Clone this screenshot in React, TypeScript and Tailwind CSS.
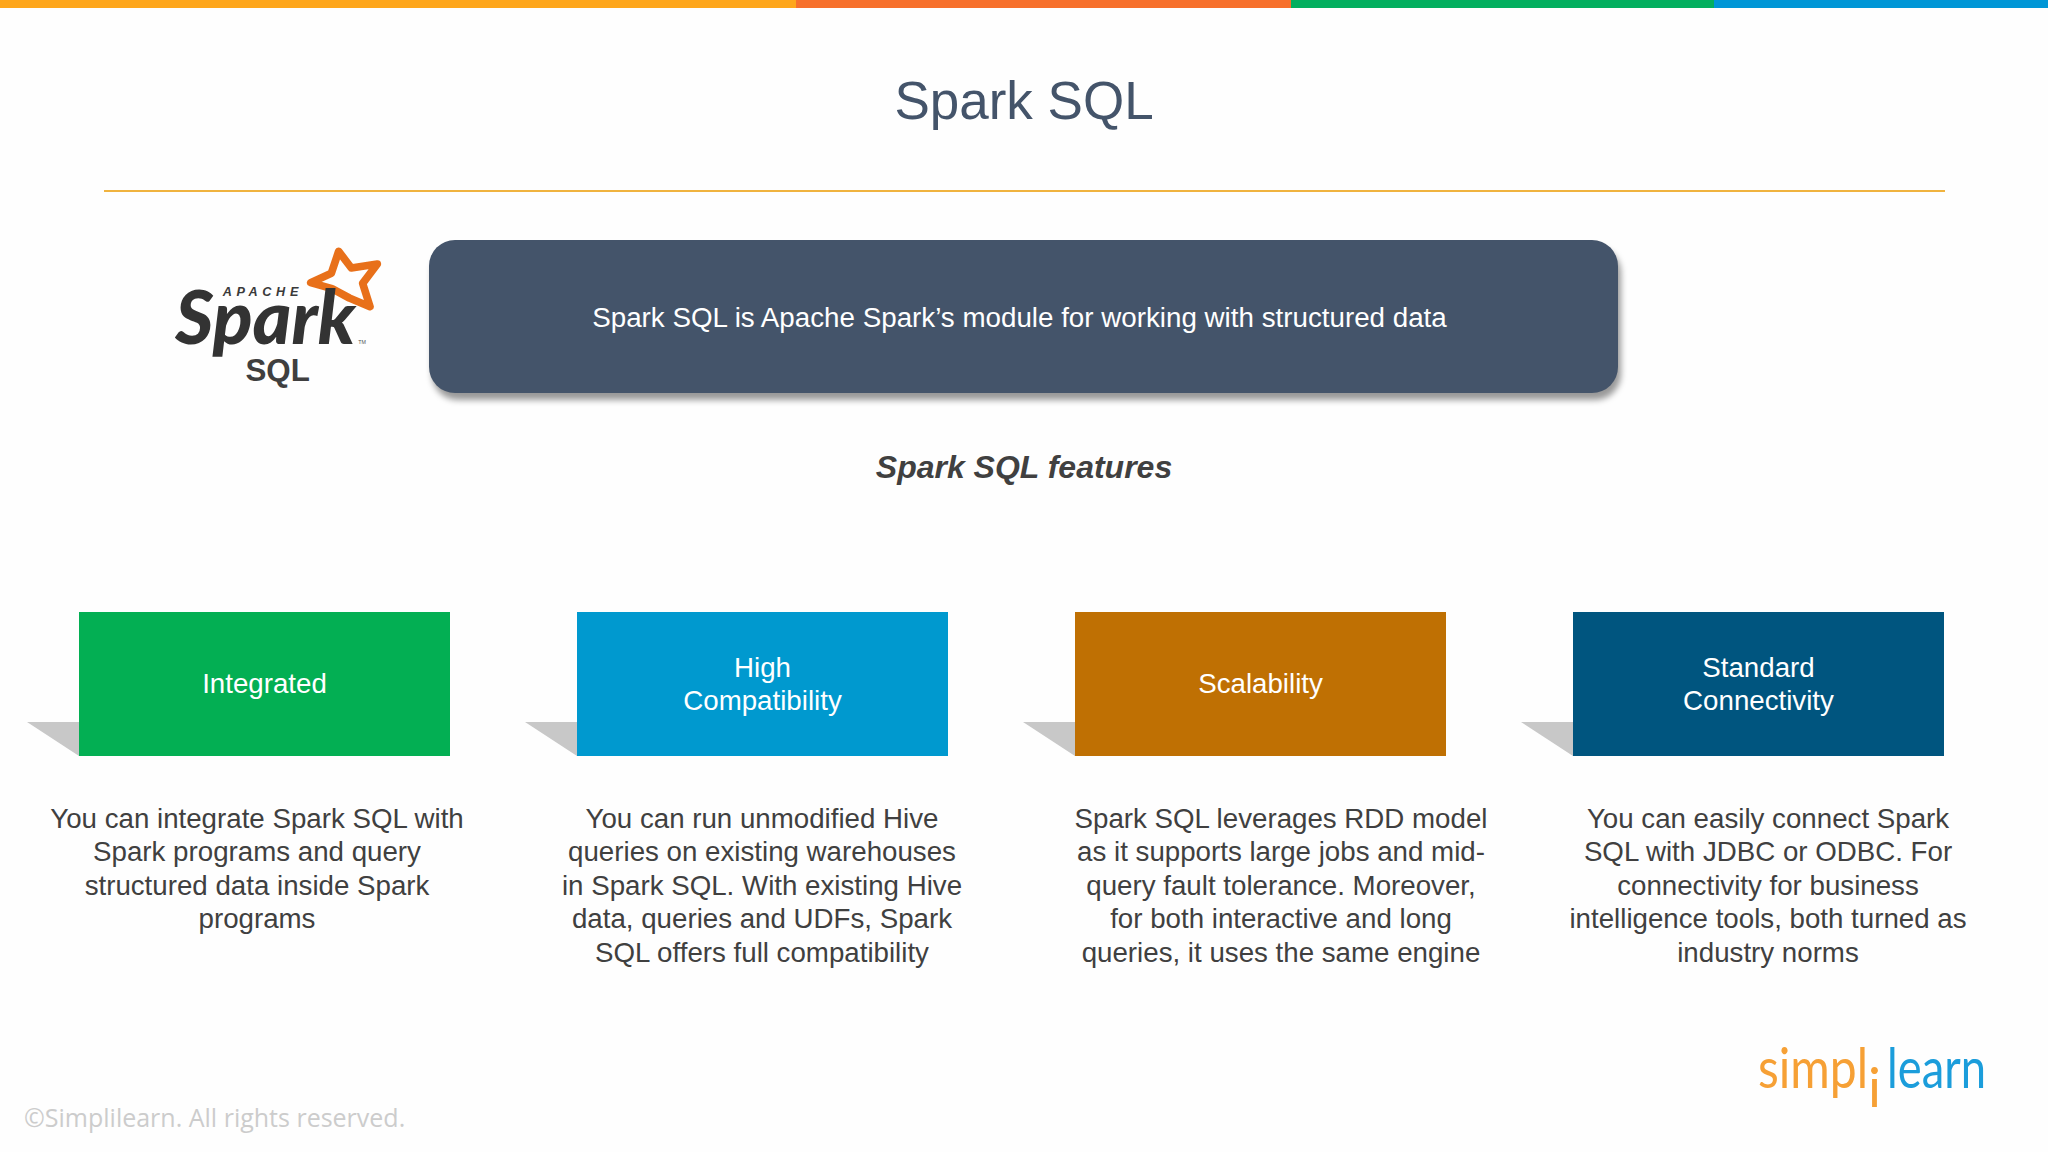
const features = [
  {
    title: ['Integrated'],
    color: 'bg-[#03af53]',
    text: ['You can integrate Spark SQL with', 'Spark programs and query', 'structured data inside Spark', 'programs'],
    cell: 'w-[514px]',
  },
  {
    title: ['High', 'Compatibility'],
    color: 'bg-[#0099cf]',
    text: ['You can run unmodified Hive', 'queries on existing warehouses', 'in Spark SQL. With existing Hive', 'data, queries and UDFs, Spark', 'SQL offers full compatibility'],
    cell: 'w-[496px]',
  },
  {
    title: ['Scalability'],
    color: 'bg-[#bf7003]',
    text: ['Spark SQL leverages RDD model', 'as it supports large jobs and mid-', 'query fault tolerance. Moreover,', 'for both interactive and long', 'queries, it uses the same engine'],
    cell: 'w-[542px]',
  },
  {
    title: ['Standard', 'Connectivity'],
    color: 'bg-[#00557f]',
    text: ['You can easily connect Spark', 'SQL with JDBC or ODBC. For', 'connectivity for business', 'intelligence tools, both turned as', 'industry norms'],
    cell: 'w-[432px]',
  },
]

function SparkLogo() {
  return (
    <svg width="260" height="170" viewBox="0 0 780 510" className="shrink-0 -mt-[10px]">
      <path
        d="M566 64 L604 114 L682 102 L638 160 L660 230 L598 204 L546 176 L482 158 L544 130 Z"
        fill="none"
        stroke="#e8701a"
        strokeWidth="23"
        strokeLinejoin="round"
      />
      <text x="218" y="197" fontFamily="'Liberation Sans', sans-serif" fontWeight="700" fontStyle="italic" fontSize="38" fill="#3a3a3a" textLength="227">
        APACHE
      </text>
      <text x="76" y="342" fontFamily="Lato, sans-serif" fontWeight="900" fontStyle="italic" fontSize="222" fill="#333333" textLength="540" lengthAdjust="spacingAndGlyphs">
        Spark
      </text>
      <text x="625" y="341" fontFamily="'Liberation Sans', sans-serif" fontSize="16" fill="#555555">
        TM
      </text>
      <text x="383" y="452" textAnchor="middle" fontFamily="'Liberation Sans', sans-serif" fontWeight="700" fontSize="94" fill="#3f3f3f">
        SQL
      </text>
    </svg>
  )
}

function SimplilearnLogo() {
  return (
    <svg width="300" height="132" viewBox="0 0 300 132" className="shrink-0">
      <g fontFamily="Lato, sans-serif" fontSize="56">
        <text x="38" y="68" fill="#f6a035" textLength="110" lengthAdjust="spacingAndGlyphs">simpl</text>
        <text x="148" y="87" fill="#f6a035" fontSize="54">i</text>
        <text x="167" y="68" fill="#1b9ddb" textLength="99" lengthAdjust="spacingAndGlyphs">learn</text>
      </g>
    </svg>
  )
}

export default function App() {
  return (
    <div className="w-[2048px] h-[1152px] bg-[#fefefe] flex flex-col overflow-hidden font-['Liberation_Sans',Arial,sans-serif]">
      {/* Top stripe */}
      <div className="flex h-2 shrink-0">
        <div className="w-[796px] bg-[#fea61b]" />
        <div className="w-[495px] bg-[#f7702c]" />
        <div className="w-[423px] bg-[#03af5f]" />
        <div className="flex-1 bg-[#0096d6]" />
      </div>

      {/* Title */}
      <div className="h-[182px] pt-[3px] shrink-0 flex items-center justify-center">
        <h1 className="text-[53px] leading-none text-[#44546a]">Spark SQL</h1>
      </div>
      <div className="ml-[104px] mr-[103px] h-[2px] shrink-0 bg-[#f0b33f]" />

      {/* Intro */}
      <div className="flex h-[153px] mt-[48px] ml-[150px] shrink-0 items-start">
        <SparkLogo />
        <div className="ml-[19px] w-[1189px] h-[153px] rounded-[26px] bg-[#44546a] shadow-[3px_7px_6px_rgba(0,0,0,0.4)] flex items-center justify-center pr-2 pt-[2px] text-[27.75px] text-white">
          Spark SQL is Apache Spark’s module for working with structured data
        </div>
      </div>

      <h2 className="mt-[54px] h-[40px] shrink-0 leading-[40px] text-center text-[32px] font-bold italic text-[#404040]">
        Spark SQL features
      </h2>

      {/* Feature cards */}
      <div className="mt-[125px] ml-[79px] flex gap-[127px] shrink-0">
        {features.map((f) => (
          <div key={f.title[0]} className={`relative w-[371px] h-[144px] flex flex-col items-center justify-center text-[27.7px] leading-[33.4px] text-white ${f.color}`}>
            <div className="absolute left-[-52px] bottom-0 w-[52px] h-[34px] bg-[#c8c8c8] [clip-path:polygon(0_0,100%_0,100%_100%)]" />
            {f.title.map((line) => (
              <div key={line}>{line}</div>
            ))}
          </div>
        ))}
      </div>

      <div className="mt-[46px] flex shrink-0">
        {features.map((f) => (
          <div key={f.title[0]} className={`${f.cell} text-center text-[27.7px] leading-[33.4px] text-[#404040]`}>
            {f.text.map((line) => (
              <div key={line} className="whitespace-nowrap">{line}</div>
            ))}
          </div>
        ))}
      </div>

      {/* Footer */}
      <div className="mt-auto h-[132px] flex items-end shrink-0">
        <div className="ml-[24px] mb-[17px] leading-[36px] text-[25px] font-['Open_Sans',sans-serif] text-[#cccccc]">
          ©Simplilearn. All rights reserved.
        </div>
        <div className="ml-auto mr-[28px]">
          <SimplilearnLogo />
        </div>
      </div>
    </div>
  )
}
